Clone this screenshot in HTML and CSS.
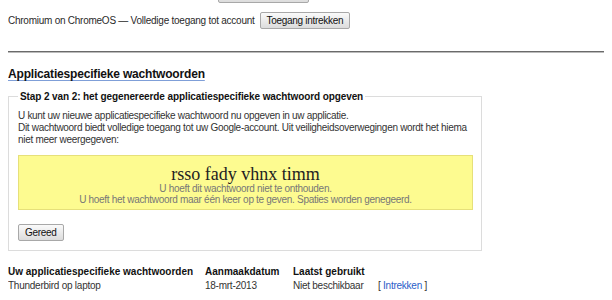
FILE: index.html
```html
<!DOCTYPE html>
<html lang="nl">
<head>
<meta charset="utf-8">
<link rel="stylesheet" href="styles.css">
</head>
<body>
<div class="devices">
  <div class="device"><span class="device-name">Google Chrome op Windows — Volledige toegang tot account</span><button class="btn">Toegang intrekken</button></div>
  <div class="device"><span class="device-name">Chromium on ChromeOS — Volledige toegang tot account</span><button class="btn">Toegang intrekken</button></div>
</div>
<div class="rule"></div>
<h2 class="section-title">Applicatiespecifieke wachtwoorden</h2>
<fieldset class="step">
  <legend class="step-legend">Stap 2 van 2: het gegenereerde applicatiespecifieke wachtwoord opgeven</legend>
  <p class="intro">U kunt uw nieuwe applicatiespecifieke wachtwoord nu opgeven in uw applicatie.<br>Dit wachtwoord biedt volledige toegang tot uw Google-account. Uit veiligheidsoverwegingen wordt het hiema niet meer weergegeven:</p>
  <div class="pw-box">
    <div class="pw">rsso fady vhnx timm</div>
    <div class="pw-note">U hoeft dit wachtwoord niet te onthouden.<br>U hoeft het wachtwoord maar één keer op te geven. Spaties worden genegeerd.</div>
  </div>
  <button class="btn done">Gereed</button>
</fieldset>
<div class="pw-table">
  <div class="th">Uw applicatiespecifieke wachtwoorden</div>
  <div class="th">Aanmaakdatum</div>
  <div class="th">Laatst gebruikt</div>
  <div class="th"></div>
  <div class="td">Thunderbird op laptop</div>
  <div class="td">18-mrt-2013</div>
  <div class="td">Niet beschikbaar</div>
  <div class="td">[ <a href="#" class="link">Intrekken</a> ]</div>
</div>
</body>
</html>
```
FILE: styles.css
```css
html, body { background: #fff; }
body {
  margin: 0 8px;
  font-family: "Liberation Sans", Arial, sans-serif;
  font-size: 10px;
  letter-spacing: -0.25px;
  color: #2a2a2a;
  overflow: hidden;
}
.devices {
  margin-top: -14px;
  display: flex;
  flex-direction: column;
  gap: 9px;
}
.device {
  display: flex;
  align-items: center;
  gap: 5px;
  height: 17px;
}
.device:first-child .device-name { width: 205px; white-space: nowrap; overflow: hidden; }
.btn {
  font-family: "Liberation Sans", Arial, sans-serif;
  font-size: 10px;
  letter-spacing: -0.3px;
  color: #111;
  height: 17px;
  padding: 0 6px;
  border: 1px solid #a8a8a8;
  border-radius: 2px;
  background: linear-gradient(#fafafa, #dcdcdc);
  line-height: 14px;
}
.rule {
  margin: 22px -8px 0 0;
  height: 1px;
  background: #6a6a6a;
  border-bottom: 1px solid #bbb;
}
.section-title {
  margin: 13px 0 0;
  font-size: 12px;
  letter-spacing: -0.18px;
  font-weight: bold;
  color: #111;
  text-decoration: underline;
  text-decoration-color: #7f9fd8;
  text-underline-offset: 2px;
  line-height: 16px;
}
.step {
  margin: 9px 0 0;
  width: 455px;
  border: 1px solid #dcdcdc;
  padding: 8px 8px 9px 9px;
}
.step-legend {
  padding: 0 2px;
  font-size: 10px;
  letter-spacing: -0.1px;
  font-weight: bold;
  color: #111;
}
.intro {
  margin: 0;
  line-height: 12px;
  color: #333;
  letter-spacing: -0.3px;
}
.pw-box {
  margin-top: 9px;
  background: #fdfb90;
  border: 1px solid #e6e07a;
  height: 55px;
  text-align: center;
  padding-top: 9px;
  box-sizing: border-box;
}
.pw {
  font-family: "Liberation Serif", "Times New Roman", serif;
  font-size: 18px;
  letter-spacing: 0;
  line-height: 18px;
  color: #222;
}
.pw-note {
  line-height: 11px;
  color: #777;
  letter-spacing: -0.3px;
}
.done {
  margin-top: 14px;
}
.pw-table {
  margin-top: 15px;
  display: grid;
  grid-template-columns: 197px 88px 85px auto;
  row-gap: 2px;
  line-height: 12px;
}
.th { font-weight: bold; color: #111; letter-spacing: 0; }
.td { color: #333; }
.link { color: #2a5dc8; text-decoration: none; }
```
